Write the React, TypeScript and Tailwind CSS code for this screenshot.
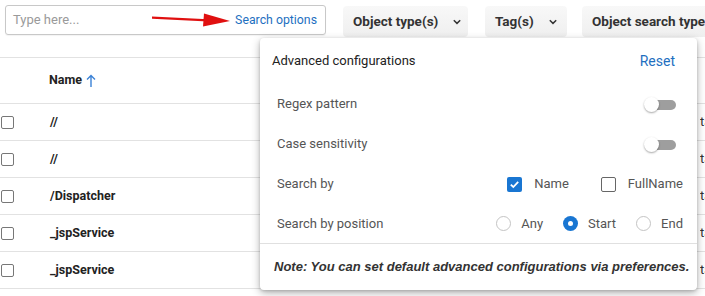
import React from "react";

const font = { fontFamily: "Roboto, 'Liberation Sans', sans-serif" };
const noteFont = { fontFamily: "'Liberation Sans', Arial, sans-serif" };

const Chevron = () => (
  <svg width="8" height="6" viewBox="0 0 8 6" className="shrink-0 text-[#333]">
    <path d="M0.8 1.2 L4 4.4 L7.2 1.2" fill="none" stroke="currentColor" strokeWidth="1.5" />
  </svg>
);

const FilterButton = ({ label, className }: { label: string; className?: string }) => (
  <div
    className={`flex h-[31px] shrink-0 items-center gap-[15px] rounded-sm bg-gradient-to-b from-[#f8f8f8] to-[#efefef] pl-[10px] pr-3 text-[13.5px] font-bold text-[#333] ${className ?? ""}`}
  >
    <span className="whitespace-nowrap">{label}</span>
    <Chevron />
  </div>
);

const RowCheckbox = () => (
  <div className="h-[13px] w-[13px] rounded-[2px] border-[1.5px] border-[#777] bg-white" />
);

const rows = ["//", "//", "/Dispatcher", "_jspService", "_jspService"];

const Toggle = () => (
  <div className="relative h-[15px] w-[32px]">
    <div className="absolute right-0 top-[3px] h-[10px] w-[26px] rounded-full bg-[#9e9e9e]" />
    <div className="absolute left-0 top-0 h-[15px] w-[15px] rounded-full bg-white shadow-[0_1px_2px_rgba(0,0,0,0.35)]" />
  </div>
);

const Check = ({ checked }: { checked?: boolean }) =>
  checked ? (
    <div className="flex h-[15px] w-[15px] items-center justify-center rounded-[2px] bg-[#1976d2]">
      <svg width="11" height="11" viewBox="0 0 11 11">
        <path d="M1.8 5.6 L4.3 8 L9.2 2.8" fill="none" stroke="white" strokeWidth="1.8" />
      </svg>
    </div>
  ) : (
    <div className="h-[15px] w-[15px] rounded-[2px] border-[1.5px] border-[#666]" />
  );

const Radio = ({ checked }: { checked?: boolean }) =>
  checked ? (
    <div className="flex h-[15px] w-[15px] items-center justify-center rounded-full bg-[#1976d2]">
      <div className="h-[5px] w-[5px] rounded-full bg-white" />
    </div>
  ) : (
    <div className="h-[15px] w-[15px] rounded-full border border-[#c4c4c4]" />
  );

export default function App() {
  return (
    <div className="relative h-[296px] w-[705px] overflow-hidden bg-white" style={font}>
      {/* top bar */}
      <div className="flex items-start pl-[5px] pt-[5px]">
        <div className="flex h-[30px] w-[321px] shrink-0 items-center rounded-[3px] border border-[#c8c8c8] pl-[7px] pr-[8px] shadow-[0_1px_1px_rgba(0,0,0,0.05)]">
          <span className="flex-1 text-[13px] text-[#9a9a9a]">Type here...</span>
          <svg width="80" height="16" viewBox="0 0 80 16" className="mr-[3px]">
            <path d="M0 4.5 L56 7.2 L56 9.6 L0 6.8 Z" fill="#e01010" />
            <path d="M52 1.5 L78 9 L51 14.5 Z" fill="#e01010" />
          </svg>
          <span className="text-[12.3px] text-[#1e6fbf]">Search options</span>
        </div>
        <FilterButton label="Object type(s)" className="ml-[17px] mt-[1px] w-[125px]" />
        <FilterButton label="Tag(s)" className="ml-[17px] mt-[1px] w-[82px]" />
        <FilterButton label="Object search types" className="ml-[15px] mt-[1px] w-[150px]" />
      </div>

      {/* table */}
      <div className="mt-[20px] text-[12.5px] text-[#222]">
        <div className="flex h-[47px] items-center border-y border-[#e2e2e2]">
          <div className="w-[49px]" />
          <span className="font-bold">Name</span>
          <svg width="12" height="14" viewBox="0 0 12 14" className="ml-[3px]">
            <path d="M6 13 V2 M2 5.5 L6 1.5 L10 5.5" fill="none" stroke="#3b82d6" strokeWidth="1.4" />
          </svg>
        </div>
        {rows.map((r, i) => (
          <div key={i} className="flex h-[37px] items-center border-b border-[#e2e2e2]">
            <div className="w-[50px] pl-[1px]">
              <RowCheckbox />
            </div>
            <span className="flex-1 font-bold">{r}</span>
            <span className="w-[5px] overflow-hidden text-[13px] text-[#333]">ta</span>
          </div>
        ))}
      </div>

      {/* advanced configurations popover */}
      <div className="absolute left-[260px] top-[38px] w-[437px] rounded bg-white text-[13px] shadow-[0_3px_8px_rgba(0,0,0,0.3),0_1px_3px_rgba(0,0,0,0.15)]">
        <div className="flex h-[46px] items-center justify-between pl-[12px] pr-[22px]">
          <span className="text-[#222]">Advanced configurations</span>
          <span className="text-[14px] text-[#1e6fbf]">Reset</span>
        </div>
        <div className="flex h-[40px] items-center justify-between pl-[17px] pr-[21px] text-[#555]">
          <span>Regex pattern</span>
          <Toggle />
        </div>
        <div className="flex h-[40px] items-center justify-between pl-[17px] pr-[21px] text-[#555]">
          <span>Case sensitivity</span>
          <Toggle />
        </div>
        <div className="flex h-[40px] items-center pl-[17px] pr-[14px] text-[#555]">
          <span className="flex-1">Search by</span>
          <div className="flex items-center gap-[12px]">
            <Check checked />
            <span>Name</span>
          </div>
          <div className="ml-[32px] flex items-center gap-[12px]">
            <Check />
            <span>FullName</span>
          </div>
        </div>
        <div className="flex h-[40px] items-center border-b border-[#e0e0e0] pl-[17px] pr-[14px] text-[#555]">
          <span className="flex-1">Search by position</span>
          <div className="flex items-center gap-[10px]">
            <Radio />
            <span>Any</span>
          </div>
          <div className="ml-[20px] flex items-center gap-[10px]">
            <Radio checked />
            <span>Start</span>
          </div>
          <div className="ml-[20px] flex items-center gap-[10px]">
            <Radio />
            <span>End</span>
          </div>
        </div>
        <div
          className="flex h-[46px] items-center whitespace-nowrap pl-[14px] text-[13px] font-bold italic text-[#333]"
          style={noteFont}
        >
          Note: You can set default advanced configurations via preferences.
        </div>
      </div>
    </div>
  );
}
